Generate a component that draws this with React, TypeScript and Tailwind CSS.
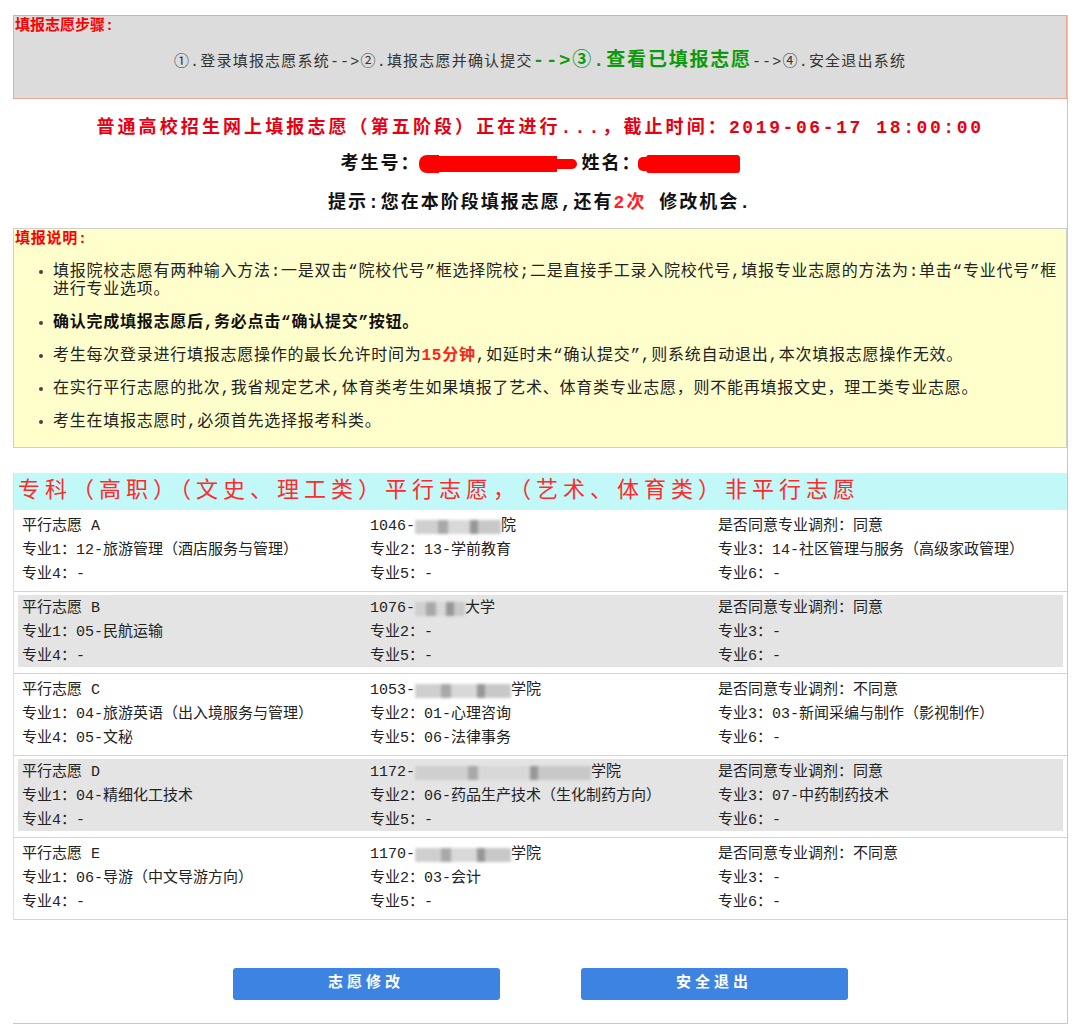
import React from "react";

const FONT = "font-['Liberation_Mono','Noto_Sans_CJK_SC',monospace]";

function Blur({ w }: { w: number }) {
  return (
    <span
      className="inline-flex h-[14px] items-center overflow-hidden align-middle blur-[1.5px]"
      style={{ width: w }}
    >
      <span className="h-full flex-1 bg-[#cfcfcf]" />
      <span className="h-full w-[10px] bg-[#a8a8a8]" />
      <span className="h-full flex-1 bg-[#d8d8d8]" />
      <span className="h-full w-[8px] bg-[#979797]" />
      <span className="h-full flex-1 bg-[#c8c8c8]" />
    </span>
  );
}

type Row = {
  name: string;
  code: string;
  blur: number;
  suffix: string;
  agree: string;
  m: string[];
};

const rows: Row[] = [
  {
    name: "平行志愿 A",
    code: "1046-",
    blur: 86,
    suffix: "院",
    agree: "同意",
    m: ["12-旅游管理（酒店服务与管理）", "13-学前教育", "14-社区管理与服务（高级家政管理）", "-", "-", "-"],
  },
  {
    name: "平行志愿 B",
    code: "1076-",
    blur: 50,
    suffix: "大学",
    agree: "同意",
    m: ["05-民航运输", "-", "-", "-", "-", "-"],
  },
  {
    name: "平行志愿 C",
    code: "1053-",
    blur: 96,
    suffix: "学院",
    agree: "不同意",
    m: ["04-旅游英语（出入境服务与管理）", "01-心理咨询", "03-新闻采编与制作（影视制作）", "05-文秘", "06-法律事务", "-"],
  },
  {
    name: "平行志愿 D",
    code: "1172-",
    blur: 176,
    suffix: "学院",
    agree: "同意",
    m: ["04-精细化工技术", "06-药品生产技术（生化制药方向）", "07-中药制药技术", "-", "-", "-"],
  },
  {
    name: "平行志愿 E",
    code: "1170-",
    blur: 96,
    suffix: "学院",
    agree: "不同意",
    m: ["06-导游（中文导游方向）", "03-会计", "-", "-", "-", "-"],
  },
];

function Bullet({ children, bold }: { children: React.ReactNode; bold?: boolean }) {
  return (
    <li className="relative pl-[39px] leading-[18px]">
      <span className="absolute left-[25px] top-[7px] h-[4px] w-[4px] rounded-full bg-[#444]" />
      <span className={bold ? "font-bold text-[#111]" : ""}>{children}</span>
    </li>
  );
}

export default function App() {
  return (
    <div className={`min-h-[1034px] bg-white pt-[15px] ${FONT}`}>
      <div className="ml-[13px] w-[1055px] border-b border-r border-[#c8c8c8] pb-[23px]">
        {/* Steps box */}
        <div className="h-[84px] border border-[#f0a890] bg-[#dcdcdc] pt-[2px]">
          <div className="h-[18px] pl-px text-[15px] font-bold leading-[18px] text-[#ff0000]">填报志愿步骤:</div>
          <div className="mt-[13px] flex h-[24px] items-baseline justify-center text-[15px] leading-[24px] tracking-[1.2px] text-[#333]">
            <span>①.登录填报志愿系统--&gt;②.填报志愿并确认提交</span>
            <span className="text-[19px] font-bold tracking-[1.8px] text-[#0c9a0c]">--&gt;③.查看已填报志愿</span>
            <span>--&gt;④.安全退出系统</span>
          </div>
        </div>

        {/* Title block */}
        <div className="mt-[16px] h-[26px] text-center text-[18px] font-bold leading-[26px] tracking-[3.1px] text-[#e60012]">
          普通高校招生网上填报志愿（第五阶段）正在进行...，截止时间：<span className="tracking-[2.6px]">2019-06-17 18:00:00</span>
        </div>
        <div className="mt-[10px] flex h-[26px] items-center justify-center text-[18px] font-bold leading-[26px] tracking-[2px] text-[#111]">
          <span>考生号：</span>
          <span className="ml-[-2px] inline-flex h-[18px] w-[158px] items-center">
            <span className="h-[18px] w-[20px] rounded-l-[8px] bg-[#ff0000]" />
            <span className="h-[16px] flex-1 bg-[#ff0000]" />
            <span className="h-[10px] w-[20px] rounded-r-[6px] bg-[#ff0000]" />
          </span>
          <span className="ml-[5px]">姓名：</span>
          <span className="ml-[-4px] inline-flex h-[18px] w-[102px] items-center">
            <span className="h-[14px] w-[8px] rounded-l-[5px] bg-[#ff0000]" />
            <span className="h-[18px] flex-1 rounded-[3px] bg-[#ff0000]" />
          </span>
        </div>
        <div className="mt-[13px] h-[26px] text-center text-[18px] font-bold leading-[26px] tracking-[2px] text-[#111]">
          提示:您在本阶段填报志愿,还有<span className="text-[#ff2222]">2次</span> 修改机会.
        </div>

        {/* Instructions */}
        <div className="mt-[12px] h-[220px] border border-[#cfcfcf] bg-[#ffffcc] pt-[2px] text-[16px] tracking-[0.75px] text-[#222]">
          <div className="h-[18px] pl-px text-[15px] font-bold leading-[18px] text-[#ff0000]">填报说明:</div>
          <ul className="mt-[14px] flex flex-col gap-[15px]">
            <Bullet>
              填报院校志愿有两种输入方法:一是双击“院校代号”框选择院校;二是直接手工录入院校代号,填报专业志愿的方法为:单击“专业代号”框
              <br />
              进行专业选项。
            </Bullet>
            <Bullet bold>确认完成填报志愿后,务必点击“确认提交”按钮。</Bullet>
            <Bullet>
              考生每次登录进行填报志愿操作的最长允许时间为<span className="font-bold text-[#ff2020]">15分钟</span>,如延时未“确认提交”,则系统自动退出,本次填报志愿操作无效。
            </Bullet>
            <Bullet>在实行平行志愿的批次,我省规定艺术,体育类考生如果填报了艺术、体育类专业志愿，则不能再填报文史，理工类专业志愿。</Bullet>
            <Bullet>考生在填报志愿时,必须首先选择报考科类。</Bullet>
          </ul>
        </div>

        {/* Table */}
        <div className="mt-[25px] border-l border-[#dedede]">
          <div className="flex h-[37px] items-center bg-[#c2f8f8] pl-[4px] text-[22px] tracking-[5px] text-[#ff2a2a]">
            专科（高职）（文史、理工类）平行志愿，（艺术、体育类）非平行志愿
          </div>
          {rows.map((r, i) => (
            <div key={r.name} className="border-b border-[#d4d4d4] px-[4px] pb-[6px] pt-[3px]">
              <div
                className={`grid h-[72px] grid-cols-[348px_348px_1fr] grid-rows-[24px_24px_24px] pl-[4px] pt-[2px] text-[15px] leading-[24px] text-[#222] ${
                  i % 2 === 1 ? "bg-[#e4e4e4]" : "bg-white"
                }`}
              >
                <div>{r.name}</div>
                <div className="flex items-center">
                  <span>{r.code}</span>
                  <Blur w={r.blur} />
                  <span>{r.suffix}</span>
                </div>
                <div>是否同意专业调剂：{r.agree}</div>
                <div>专业1：{r.m[0]}</div>
                <div>专业2：{r.m[1]}</div>
                <div>专业3：{r.m[2]}</div>
                <div>专业4：{r.m[3]}</div>
                <div>专业5：{r.m[4]}</div>
                <div>专业6：{r.m[5]}</div>
              </div>
            </div>
          ))}
        </div>

        {/* Buttons */}
        <div className="mt-[48px] flex justify-center gap-[81px]">
          <button className="h-[32px] w-[267px] rounded-[3px] bg-[#3d83e1] text-[15px] font-bold tracking-[4px] text-white">
            志愿修改
          </button>
          <button className="h-[32px] w-[267px] rounded-[3px] bg-[#3d83e1] text-[15px] font-bold tracking-[4px] text-white">
            安全退出
          </button>
        </div>
      </div>
    </div>
  );
}
